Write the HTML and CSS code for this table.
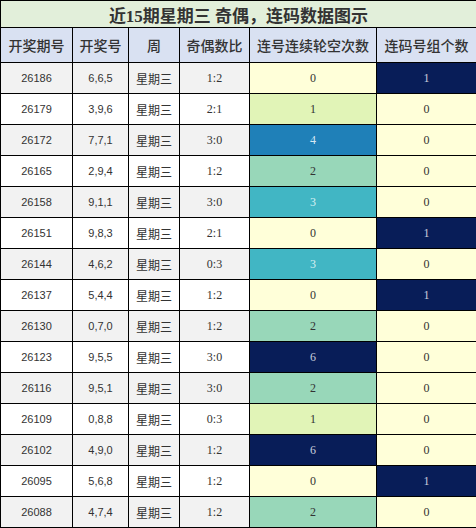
FILE: index.html
```html
<!DOCTYPE html>
<html lang="zh-CN">
<head>
  <meta charset="UTF-8" />
  <title>近15期星期三 奇偶，连码数据图示</title>
  <link rel="stylesheet" href="styles.css">
</head>
<body>
  <table class="chart">
    <colgroup>
      <col class="c-issue">
      <col class="c-num">
      <col class="c-week">
      <col class="c-ratio">
      <col class="c-gap">
      <col class="c-count">
    </colgroup>
    <thead>
      <tr><th colspan="6" class="title">近15期星期三 奇偶，连码数据图示</th></tr>
      <tr class="head">
        <th>开奖期号</th><th>开奖号</th><th>周</th><th>奇偶数比</th><th>连号连续轮空次数</th><th>连码号组个数</th>
      </tr>
    </thead>
    <tbody>
      <tr><td class="issue">26186</td><td class="num">6,6,5</td><td class="week">星期三</td><td class="ratio">1:2</td><td class="v0">0</td><td class="v6">1</td></tr>
      <tr><td class="issue">26179</td><td class="num">3,9,6</td><td class="week">星期三</td><td class="ratio">2:1</td><td class="v1">1</td><td class="v0">0</td></tr>
      <tr><td class="issue">26172</td><td class="num">7,7,1</td><td class="week">星期三</td><td class="ratio">3:0</td><td class="v4">4</td><td class="v0">0</td></tr>
      <tr><td class="issue">26165</td><td class="num">2,9,4</td><td class="week">星期三</td><td class="ratio">1:2</td><td class="v2">2</td><td class="v0">0</td></tr>
      <tr><td class="issue">26158</td><td class="num">9,1,1</td><td class="week">星期三</td><td class="ratio">3:0</td><td class="v3">3</td><td class="v0">0</td></tr>
      <tr><td class="issue">26151</td><td class="num">9,8,3</td><td class="week">星期三</td><td class="ratio">2:1</td><td class="v0">0</td><td class="v6">1</td></tr>
      <tr><td class="issue">26144</td><td class="num">4,6,2</td><td class="week">星期三</td><td class="ratio">0:3</td><td class="v3">3</td><td class="v0">0</td></tr>
      <tr><td class="issue">26137</td><td class="num">5,4,4</td><td class="week">星期三</td><td class="ratio">1:2</td><td class="v0">0</td><td class="v6">1</td></tr>
      <tr><td class="issue">26130</td><td class="num">0,7,0</td><td class="week">星期三</td><td class="ratio">1:2</td><td class="v2">2</td><td class="v0">0</td></tr>
      <tr><td class="issue">26123</td><td class="num">9,5,5</td><td class="week">星期三</td><td class="ratio">3:0</td><td class="v6">6</td><td class="v0">0</td></tr>
      <tr><td class="issue">26116</td><td class="num">9,5,1</td><td class="week">星期三</td><td class="ratio">3:0</td><td class="v2">2</td><td class="v0">0</td></tr>
      <tr><td class="issue">26109</td><td class="num">0,8,8</td><td class="week">星期三</td><td class="ratio">0:3</td><td class="v1">1</td><td class="v0">0</td></tr>
      <tr><td class="issue">26102</td><td class="num">4,9,0</td><td class="week">星期三</td><td class="ratio">1:2</td><td class="v6">6</td><td class="v0">0</td></tr>
      <tr><td class="issue">26095</td><td class="num">5,6,8</td><td class="week">星期三</td><td class="ratio">1:2</td><td class="v0">0</td><td class="v6">1</td></tr>
      <tr><td class="issue">26088</td><td class="num">4,7,4</td><td class="week">星期三</td><td class="ratio">1:2</td><td class="v2">2</td><td class="v0">0</td></tr>
    </tbody>
  </table>
</body>
</html>
```

FILE: styles.css
```css
body {
  margin: 0;
  background-color: #fff;
  color: #333;
  font-family: "Liberation Sans", "Noto Sans CJK SC", sans-serif;
}

.chart {
  width: 476px;
  border-collapse: collapse;
  table-layout: fixed;
}

.c-issue { width: 72px; }
.c-num { width: 56px; }
.c-week { width: 51px; }
.c-ratio { width: 70px; }
.c-gap { width: 127px; }
.c-count { width: 100px; }

th, td {
  border: 1px solid #000;
  padding: 0;
  text-align: center;
  white-space: nowrap;
  overflow: hidden;
}

.title {
  height: 26px;
  background-color: #e2efda;
  font-family: "Liberation Serif", "Noto Sans CJK SC", serif;
  font-size: 17px;
  font-weight: bold;
  color: #333;
}

.head th {
  height: 34px;
  background-color: #d9e1f2;
  font-family: "Noto Sans CJK SC", sans-serif;
  font-size: 14px;
  font-weight: 500;
  color: #333;
}

td {
  height: 30px;
  font-size: 11px;
  color: #333;
}

tbody tr:nth-child(odd) td { background-color: #f2f2f2; }
tbody tr:nth-child(even) td { background-color: #fff; }

.week {
  font-family: "Noto Sans CJK SC", sans-serif;
  font-size: 12px;
}

.ratio,
td.v0, td.v1, td.v2, td.v3, td.v4, td.v6 {
  font-family: "Liberation Serif", serif;
  font-size: 12px;
}

tbody tr td.v0 { background-color: #ffffd9; }
tbody tr td.v1 { background-color: #e1f4b7; }
tbody tr td.v2 { background-color: #98d7b9; }
tbody tr td.v3 { background-color: #41b6c4; color: #d8f0f3; }
tbody tr td.v4 { background-color: #1f80b8; color: #d6e8f3; }
tbody tr td.v6 { background-color: #081d58; color: #c9cedd; }
```
